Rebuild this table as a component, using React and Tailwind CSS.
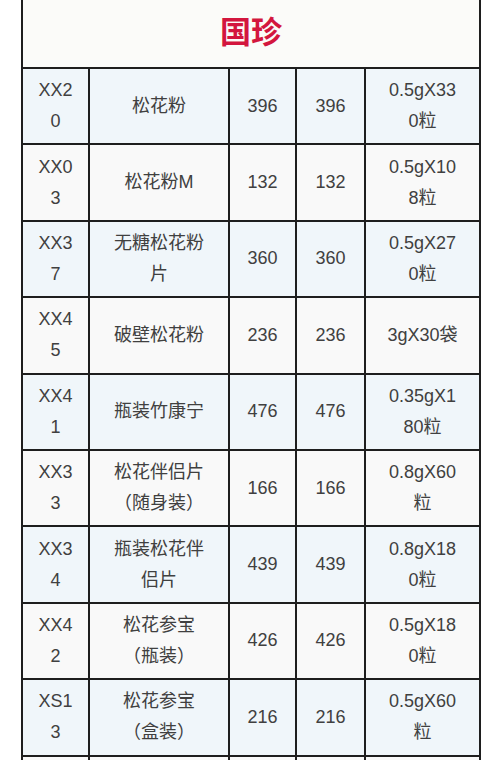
import React from 'react';

const rows = [
  [['XX2', '0'], ['松花粉'], ['396'], ['396'], ['0.5gX33', '0粒']],
  [['XX0', '3'], ['松花粉M'], ['132'], ['132'], ['0.5gX10', '8粒']],
  [['XX3', '7'], ['无糖松花粉', '片'], ['360'], ['360'], ['0.5gX27', '0粒']],
  [['XX4', '5'], ['破壁松花粉'], ['236'], ['236'], ['3gX30袋']],
  [['XX4', '1'], ['瓶装竹康宁'], ['476'], ['476'], ['0.35gX1', '80粒']],
  [['XX3', '3'], ['松花伴侣片', '（随身装）'], ['166'], ['166'], ['0.8gX60', '粒']],
  [['XX3', '4'], ['瓶装松花伴', '侣片'], ['439'], ['439'], ['0.8gX18', '0粒']],
  [['XX4', '2'], ['松花参宝', '（瓶装）'], ['426'], ['426'], ['0.5gX18', '0粒']],
  [['XS1', '3'], ['松花参宝', '（盒装）'], ['216'], ['216'], ['0.5gX60', '粒']],
  [[''], [''], [''], [''], ['']],
];

export default function App() {
  return (
    <div
      className="w-[500px] h-[760px] overflow-hidden bg-white pl-[21px]"
      style={{ fontFamily: '"Liberation Sans", "Noto Sans CJK SC", sans-serif' }}
    >
      <table className="table-fixed border-collapse w-[458px] text-[#404040] text-[18px] leading-[31px] mt-[-2px]">
        <colgroup>
          <col className="w-[67px]" />
          <col className="w-[140px]" />
          <col className="w-[67px]" />
          <col className="w-[69px]" />
          <col className="w-[115px]" />
        </colgroup>
        <tbody>
          <tr className="h-[69px] bg-[#fbfbf9]">
            <td
              colSpan={5}
              className="border-2 border-[#1e1e1e] text-center text-[31px] leading-[40px] font-bold text-[#d3163e] pb-[8px]"
              style={{ fontFamily: '"Noto Sans CJK SC", sans-serif' }}
            >
              国珍
            </td>
          </tr>
          {rows.map((row, i) => (
            <tr
              key={i}
              className={i % 2 === 0 ? 'h-[76.4px] bg-[#f0f6fa]' : 'h-[76.4px] bg-[#f9f9f9]'}
            >
              {row.map((lines, j) => (
                <td key={j} className="border-2 border-[#1e1e1e] text-center align-middle p-0">
                  {lines.map((l, k) => (
                    <div key={k}>{l}</div>
                  ))}
                </td>
              ))}
            </tr>
          ))}
        </tbody>
      </table>
    </div>
  );
}
